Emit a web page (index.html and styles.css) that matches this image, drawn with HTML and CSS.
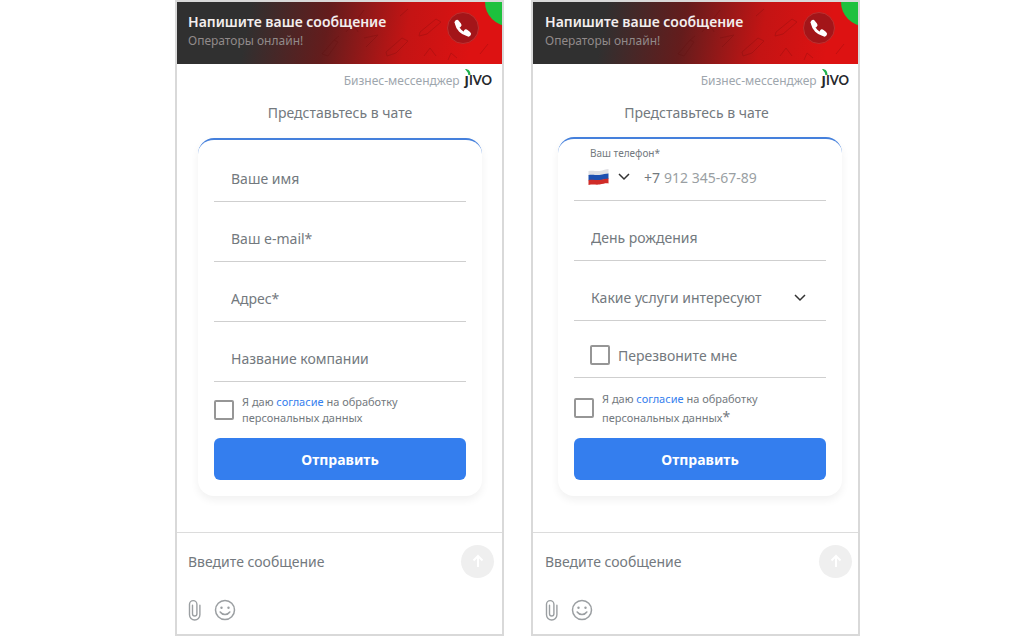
FILE: index.html
```html
<!DOCTYPE html>
<html lang="ru">
<head>
    <meta charset="UTF-8">
    <meta name="viewport" content="width=device-width, initial-scale=1.0">
    <title>Напишите ваше сообщение</title>
    <link rel="stylesheet" href="styles.css">
</head>
<body>

    <!-- Общие иконки -->
    <svg class="sprite" aria-hidden="true">
        <symbol id="icon-phone" viewBox="0 0 20 20">
            <path d="M3.500 6C4.500 11 9 15.500 14 16.500" fill="none" stroke="currentColor" stroke-width="3"/>
            <path d="M4 4.500L6 7M13 14L15.500 16" fill="none" stroke="currentColor" stroke-width="5" stroke-linecap="round"/>
        </symbol>
        <symbol id="icon-clip" viewBox="0 0 14 22">
            <path d="M4 6v8.500a2.200 2.200 0 0 0 4.400 0V5a3.700 3.700 0 0 0-7.400 0v10.500a5.200 5.200 0 0 0 10.400 0V6" transform="translate(.5 .3)" fill="none" stroke="currentColor" stroke-width="1.400" stroke-linecap="round"/>
        </symbol>
        <symbol id="icon-smile" viewBox="0 0 22 22">
            <circle cx="11" cy="11" r="9.500" fill="none" stroke="currentColor" stroke-width="1.500"/>
            <circle cx="7.500" cy="8.800" r="1.200" fill="currentColor"/>
            <circle cx="14.500" cy="8.800" r="1.200" fill="currentColor"/>
            <path d="M6.200 13c2.100 3.200 7.500 3.200 9.600 0" fill="none" stroke="currentColor" stroke-width="1.500" stroke-linecap="round"/>
        </symbol>
        <symbol id="icon-up" viewBox="0 0 16 16">
            <path d="M8 14V3M3.500 7.500L8 3l4.500 4.500" fill="none" stroke="currentColor" stroke-width="2"/>
        </symbol>
        <symbol id="icon-doodle" viewBox="0 0 200 62">
            <g fill="none" stroke="#5a0808" stroke-width="1">
                <path d="M20 52l12-14 4 2-10 14zM32 38l5-4M62 36l14-3-12 12M84 50l16-14 6 3-12 12-9 3zM118 30l16-13 5 3-14 12-8 2zM122 54l6-8 6 8M146 58l3-7 6 5M56 16l6-8M44 30c4-6 10-6 12 0M150 24l8-5M98 14l8-7M178 52l8-10"/>
            </g>
        </symbol>
        <symbol id="icon-leaf" viewBox="0 0 6 6">
            <path d="M0 0h6v6H0z" fill="#fff"/>
            <path d="M0 0c3.500 0 5.500 2 5.500 6H3.300C3.300 3.500 2 2.500 0 0z" fill="#1fb14c"/>
        </symbol>
    </svg>

    <main class="page">

        <section class="widget">
            <header class="widget-header">
                <svg class="doodle" aria-hidden="true"><use href="#icon-doodle"/></svg>
                <div class="header-text">
                    <h1>Напишите ваше сообщение</h1>
                    <p>Операторы онлайн!</p>
                </div>
                <button type="button" class="call-button" aria-label="Позвонить"><svg><use href="#icon-phone"/></svg></button>
                <span class="close-corner"></span>
            </header>
            <div class="widget-body">
                <a href="#" class="brand">
                    <span>Бизнес-мессенджер</span>
                    <span class="logo"><span class="logo-j">j</span>IVO<svg class="logo-leaf"><use href="#icon-leaf"/></svg></span>
                </a>
                <h2>Представьтесь в чате</h2>
                <form class="card">
                    <input class="field" type="text" placeholder="Ваше имя" aria-label="Ваше имя">
                    <input class="field" type="email" placeholder="Ваш e-mail*" aria-label="Ваш e-mail">
                    <input class="field" type="text" placeholder="Адрес*" aria-label="Адрес">
                    <input class="field" type="text" placeholder="Название компании" aria-label="Название компании">
                    <div class="consent">
                        <input type="checkbox" id="consent-1">
                        <label for="consent-1">Я даю <a href="#">согласие</a> на обработку<br>персональных данных</label>
                    </div>
                    <button type="button" class="submit">Отправить</button>
                </form>
            </div>
            <footer class="composer">
                <div class="message-row">
                    <input type="text" placeholder="Введите сообщение" aria-label="Введите сообщение">
                    <button type="button" class="send" aria-label="Отправить сообщение"><svg><use href="#icon-up"/></svg></button>
                </div>
                <div class="tools">
                    <button type="button" aria-label="Прикрепить файл"><svg class="clip"><use href="#icon-clip"/></svg></button>
                    <button type="button" aria-label="Смайлы"><svg class="smile"><use href="#icon-smile"/></svg></button>
                </div>
            </footer>
        </section>

        <section class="widget widget-extended">
            <header class="widget-header">
                <svg class="doodle" aria-hidden="true"><use href="#icon-doodle"/></svg>
                <div class="header-text">
                    <h1>Напишите ваше сообщение</h1>
                    <p>Операторы онлайн!</p>
                </div>
                <button type="button" class="call-button" aria-label="Позвонить"><svg><use href="#icon-phone"/></svg></button>
                <span class="close-corner"></span>
            </header>
            <div class="widget-body">
                <a href="#" class="brand">
                    <span>Бизнес-мессенджер</span>
                    <span class="logo"><span class="logo-j">j</span>IVO<svg class="logo-leaf"><use href="#icon-leaf"/></svg></span>
                </a>
                <h2>Представьтесь в чате</h2>
                <form class="card">
                    <div class="phone">
                        <label for="phone">Ваш телефон*</label>
                        <div class="phone-row">
                            <button type="button" class="country" aria-label="Страна">
                                <svg class="flag" viewBox="0 0 20 16">
                                    <path d="M0 2c5-1 7 .5 11 0 4-.5 6-2 9-2v5c-3 0-5 1.500-9 2-4 .5-6-.5-11 0z" fill="#e0e0e4"/>
                                    <path d="M0 6c5-1 7 .5 11 0 4-.5 6-1.500 9-1.500V10c-3 0-5 1-9 1.500-4 .5-6-.5-11 0z" fill="#1c4fb0"/>
                                    <path d="M0 11c5-1 7 .5 11 0 4-.5 6-1.500 9-1.500v5c-3-.5-5 .5-9 1-4 .5-6-.5-11 .5z" fill="#d02b27"/>
                                </svg>
                                <svg class="chevron" viewBox="0 0 12 8"><path d="M1 1l5 5 5-5" fill="none" stroke="#333" stroke-width="1.500"/></svg>
                            </button>
                            <span class="code">+7</span>
                            <input type="tel" id="phone" placeholder="912 345-67-89">
                        </div>
                    </div>
                    <input class="field" type="text" placeholder="День рождения" aria-label="День рождения">
                    <select class="field" aria-label="Какие услуги интересуют">
                        <option>Какие услуги интересуют</option>
                    </select>
                    <div class="callback">
                        <input type="checkbox" id="callback">
                        <label for="callback">Перезвоните мне</label>
                    </div>
                    <div class="consent">
                        <input type="checkbox" id="consent-2">
                        <label for="consent-2">Я даю <a href="#">согласие</a> на обработку<br>персональных данных<span class="star">*</span></label>
                    </div>
                    <button type="button" class="submit">Отправить</button>
                </form>
            </div>
            <footer class="composer">
                <div class="message-row">
                    <input type="text" placeholder="Введите сообщение" aria-label="Введите сообщение">
                    <button type="button" class="send" aria-label="Отправить сообщение"><svg><use href="#icon-up"/></svg></button>
                </div>
                <div class="tools">
                    <button type="button" aria-label="Прикрепить файл"><svg class="clip"><use href="#icon-clip"/></svg></button>
                    <button type="button" aria-label="Смайлы"><svg class="smile"><use href="#icon-smile"/></svg></button>
                </div>
            </footer>
        </section>

    </main>

</body>
</html>
```
FILE: styles.css
```css
* {
    box-sizing: border-box;
}

body {
    margin: 0;
    background-color: #fff;
    color: #73797e;
    font-family: "Noto Sans", "Open Sans", sans-serif;
    font-size: 14px;
}

h1, h2, p {
    margin: 0;
}

button, input, select {
    font: inherit;
    color: inherit;
    padding: 0;
    border: none;
    background: none;
}

a {
    color: #347eee;
    text-decoration: none;
}

svg {
    display: block;
}

.sprite {
    position: absolute;
    width: 0;
    height: 0;
}

.page {
    display: grid;
    grid-template-columns: 1fr 1fr;
    gap: 27px;
    padding: 0 172px 0 175px;
}

.widget {
    display: flex;
    flex-direction: column;
    min-width: 0;
    border: 2px solid #d9d9d9;
}

/* Шапка */
.widget-header {
    position: relative;
    display: flex;
    justify-content: space-between;
    align-items: flex-start;
    height: 62px;
    padding: 10px 23px 0 11px;
    overflow: hidden;
    background: linear-gradient(100deg, #303030 22%, #641c1c 46%, #c41414 70%, #dd1212 90%);
}

.doodle {
    position: absolute;
    top: 0;
    right: 0;
    width: 200px;
    height: 62px;
    opacity: 0.2;
}

.header-text {
    position: relative;
}

.header-text h1 {
    color: #f3eeee;
    font-size: 14px;
    font-weight: 600;
    line-height: 20px;
}

.header-text p {
    color: #918a8a;
    font-size: 12px;
    line-height: 18px;
}

.call-button {
    position: relative;
    display: grid;
    place-items: center;
    width: 32px;
    height: 32px;
    border: 1px solid #bd3030;
    border-radius: 50%;
    background-color: #a31519;
    color: #fff;
}

.call-button svg {
    width: 20px;
    height: 20px;
}

.close-corner {
    position: absolute;
    top: -24px;
    right: -31px;
    width: 48px;
    height: 48px;
    border-radius: 50%;
    background-color: #1dc13d;
}

/* Содержимое */
.widget-body {
    flex: 1;
    padding: 5px 20px 36px 21px;
}

.brand {
    display: flex;
    justify-content: flex-end;
    align-items: center;
    gap: 5px;
    height: 22px;
    margin-right: -10px;
    color: #9ea6ad;
    font-size: 12px;
}

.logo {
    position: relative;
    padding-bottom: 2px;
    color: #26282c;
    font-family: Lato, sans-serif;
    font-size: 13px;
    font-weight: 700;
    line-height: 20px;
}

.logo-j {
    font-size: 17px;
}

.logo-leaf {
    position: absolute;
    top: 0;
    left: 0;
    width: 6px;
    height: 6px;
}

.widget-body h2 {
    padding: 11px 0 14px;
    font-size: 14px;
    font-weight: 400;
    line-height: 22px;
    text-align: center;
}

.card {
    padding: 0 16px 16px;
    border-top: 2px solid #4580dc;
    border-radius: 16px;
    box-shadow: 0 4px 8px rgba(0, 0, 0, 0.06);
}

.field {
    display: block;
    width: 100%;
    height: 60px;
    padding: 14px 17px 0;
    border-bottom: 1px solid #cfcfcf;
    border-radius: 0;
}

.field:first-child {
    height: 62px;
    padding-top: 16px;
}

input::placeholder {
    color: inherit;
    opacity: 1;
}

select.field {
    appearance: none;
    background: url("data:image/svg+xml,%3Csvg xmlns='http://www.w3.org/2000/svg' width='12' height='8'%3E%3Cpath d='M1 1l5 5 5-5' fill='none' stroke='%23333' stroke-width='1.5'/%3E%3C/svg%3E") no-repeat right 20px top 33px;
}

input[type="checkbox"] {
    appearance: none;
    flex: none;
    width: 20px;
    height: 20px;
    margin: 0;
    border: 2px solid #969696;
    border-radius: 2px;
}

input[type="checkbox"]:checked {
    background-color: #347eee;
}

.consent {
    display: flex;
    align-items: center;
    gap: 8px;
    height: 56px;
    font-size: 11px;
    line-height: 16px;
}

.submit {
    display: block;
    width: 100%;
    height: 42px;
    border-radius: 6px;
    background-color: #347eee;
    color: #fff;
    font-weight: 700;
    cursor: pointer;
}

/* Телефон */
.phone {
    height: 62px;
    padding: 6px 14px 0;
    border-bottom: 1px solid #cfcfcf;
}

.phone label {
    display: block;
    padding-left: 2px;
    font-size: 10px;
    line-height: 16px;
}

.phone-row {
    display: flex;
    align-items: center;
    height: 32px;
}

.country {
    display: flex;
    align-items: center;
    gap: 9px;
    margin-right: 14px;
}

.flag {
    width: 21px;
    height: 16px;
}

.chevron {
    width: 12px;
    height: 8px;
}

.phone input {
    flex: 1;
    min-width: 0;
    margin-left: 4px;
    color: #9a9fa3;
}

.callback {
    display: flex;
    align-items: center;
    gap: 8px;
    height: 57px;
    padding: 12px 16px 0;
    border-bottom: 1px solid #cfcfcf;
}

.widget-extended .widget-body {
    padding: 5px 16px 36px 25px;
}

.widget-extended .brand {
    margin-right: -7px;
}

.widget-extended h2 {
    padding-bottom: 13px;
    margin-left: -7px;
}

.widget-extended .consent {
    height: 60px;
    line-height: 19px;
}

.star {
    font-size: 14px;
    line-height: 1;
}

/* Ввод сообщения */
.composer {
    padding: 11px 8px 13px 11px;
    border-top: 1px solid #dcdcdc;
}

.message-row {
    display: flex;
    align-items: center;
    height: 34px;
}

.message-row input {
    flex: 1;
    min-width: 0;
}

.send {
    display: grid;
    place-items: center;
    width: 33px;
    height: 33px;
    border-radius: 50%;
    background-color: #efefef;
    color: #fff;
}

.send svg {
    width: 16px;
    height: 16px;
}

.tools {
    display: flex;
    align-items: center;
    gap: 12px;
    margin-top: 21px;
    color: #9b9fa2;
}

.clip {
    width: 14px;
    height: 22px;
}

.smile {
    width: 22px;
    height: 22px;
}

.widget-extended .widget-header,
.widget-extended .composer {
    padding-left: 12px;
}

.widget-extended .composer {
    padding-right: 6px;
}
```
